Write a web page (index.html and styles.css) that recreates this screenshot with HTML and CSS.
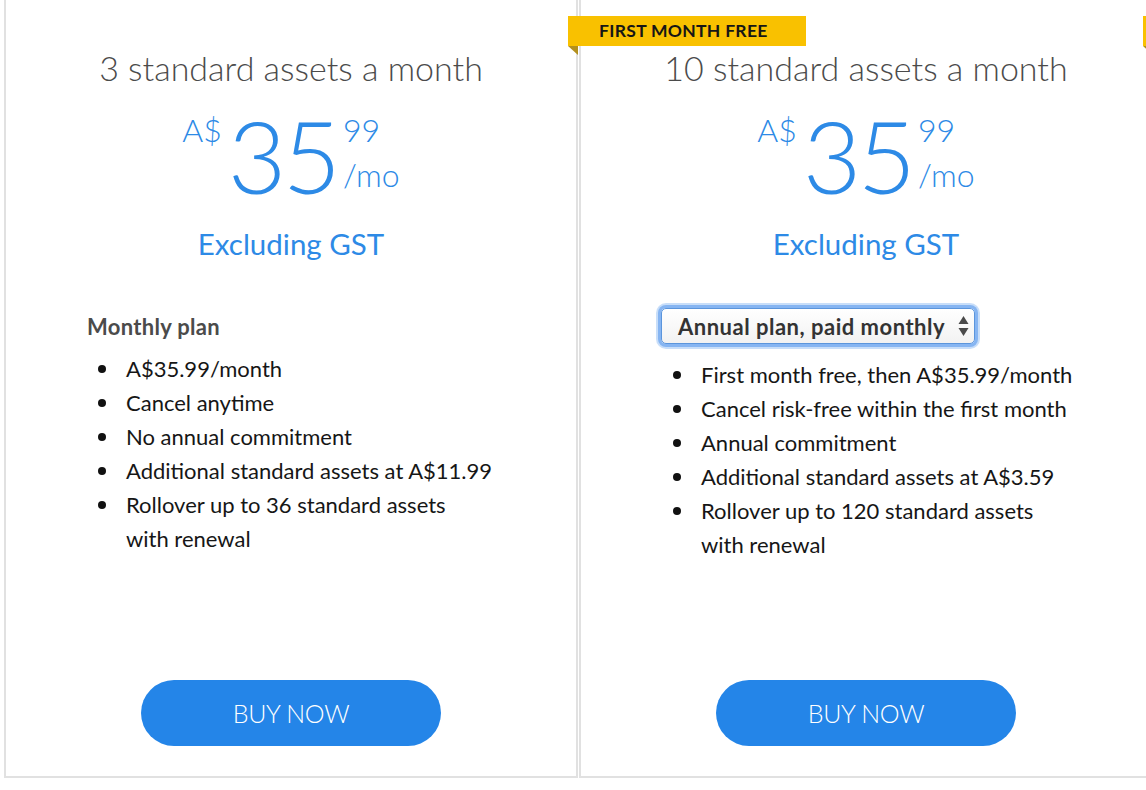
FILE: index.html
```html
<!DOCTYPE html>
<html lang="en">
<head>
<meta charset="utf-8">
<title>Plans</title>
<link rel="stylesheet" href="styles.css">
</head>
<body>
<div class="cards">
  <section class="card">
    <h2 class="title">3 standard assets a month</h2>
    <div class="price">
      <span class="cur">A$</span>
      <span class="big">35</span>
      <span class="side"><span class="cents">99</span><span class="per">/mo</span></span>
    </div>
    <div class="tax">Excluding GST</div>
    <div class="plan">
      <div class="plan-name">Monthly plan</div>
      <ul class="feats">
        <li>A$35.99/month</li>
        <li>Cancel anytime</li>
        <li>No annual commitment</li>
        <li>Additional standard assets at A$11.99</li>
        <li>Rollover up to 36 standard assets with&nbsp;renewal</li>
      </ul>
    </div>
    <div class="btn-row"><a class="buy" href="#">BUY NOW</a></div>
  </section>
  <section class="card">
    <div class="ribbon">FIRST MONTH FREE</div>
    <h2 class="title">10 standard assets a month</h2>
    <div class="price">
      <span class="cur">A$</span>
      <span class="big">35</span>
      <span class="side"><span class="cents">99</span><span class="per">/mo</span></span>
    </div>
    <div class="tax">Excluding GST</div>
    <div class="plan">
      <div class="select">
        <span class="sel-text">Annual plan, paid monthly</span>
        <svg class="sel-arrows" width="13" height="24" viewBox="0 0 13 24"><path d="M6.5 2 L11.5 10 L1.5 10 Z" fill="#4a4a4a"/><path d="M1.5 14 L11.5 14 L6.5 22 Z" fill="#4a4a4a"/></svg>
      </div>
      <ul class="feats">
        <li>First month free, then A$35.99/month</li>
        <li>Cancel risk-free within the first month</li>
        <li>Annual commitment</li>
        <li>Additional standard assets at A$3.59</li>
        <li>Rollover up to 120 standard assets with&nbsp;renewal</li>
      </ul>
    </div>
    <div class="btn-row"><a class="buy" href="#">BUY NOW</a></div>
  </section>
  <section class="card">
    <div class="ribbon" aria-hidden="true"></div>
  </section>
</div>
</body>
</html>
```
FILE: styles.css
```css
* { box-sizing: border-box; }
html, body { margin: 0; padding: 0; background: #fff; overflow: hidden; }
body { font-family: "Lato", "Open Sans", sans-serif; }
.cards {
  display: flex;
  gap: 1px;
  padding-left: 4px;
  width: 1800px;
}
.card {
  position: relative;
  flex: 0 0 574px;
  height: 778px;
  border: 2px solid #e1e1e1;
  border-top: none;
  display: flex;
  flex-direction: column;
  padding-top: 46px;
  padding-bottom: 30px;
}
.ribbon {
  position: absolute;
  top: 16px;
  left: -13px;
  width: 238px;
  height: 30px;
  background: #f9c100;
  color: #161616;
  font-weight: 700;
  font-size: 17.5px;
  letter-spacing: 0.3px;
  line-height: 30px;
  padding-left: 31px;
}
.ribbon::after {
  content: "";
  position: absolute;
  left: 0;
  top: 30px;
  border-top: 9px solid #b3901e;
  border-left: 10px solid transparent;
}
.title {
  margin: 0;
  text-align: center;
  font-weight: 300;
  font-size: 34px;
  line-height: 44px;
  color: #4b4b4b;
}
.price {
  display: flex;
  justify-content: center;
  align-items: flex-start;
  color: #2d8ae6;
  margin-top: 20px;
  height: 96px;
}
.cur {
  font-weight: 300;
  font-size: 32px;
  line-height: 34px;
  margin-top: 3px;
  margin-right: 6px;
}
.big {
  font-weight: 300;
  font-size: 101px;
  letter-spacing: -4px;
  line-height: 90px;
  margin-right: 6px;
}
.side { display: flex; flex-direction: column; }
.cents { font-weight: 300; font-size: 32px; line-height: 34px; margin-top: 3px; }
.per { font-weight: 300; font-size: 32px; line-height: 34px; margin-top: 11px; }
.tax {
  text-align: center;
  color: #2d8ae6;
  font-size: 29.5px;
  line-height: 40px;
  margin-top: 18px;
}
.plan {
  padding-left: 81px;
  margin-top: 48px;
}
.plan-name {
  font-weight: 700;
  font-size: 22px;
  letter-spacing: 0.3px;
  line-height: 30px;
  color: #4b4b4b;
}
.select {
  display: flex;
  align-items: center;
  justify-content: space-between;
  width: 314px;
  height: 36px;
  margin-left: -1px;
  margin-top: -4px;
  padding: 0 4px 0 16px;
  border: 1px solid #5b95dc;
  border-radius: 5px;
  background: linear-gradient(#ffffff, #f2f2f2);
  box-shadow: 0 0 0 3px #86b5f2, 0 0 0 5px rgba(134,181,242,0.45);
}
.sel-text {
  font-weight: 700;
  font-size: 22px;
  letter-spacing: 0.5px;
  color: #333;
}
.feats {
  list-style: none;
  margin: 10px 0 0;
  padding-left: 39px;
  width: 412px;
  font-size: 22px;
  line-height: 34px;
  color: #161616;
}
.feats li { position: relative; }
.feats li::before {
  content: "";
  position: absolute;
  left: -28px;
  top: 13px;
  width: 8px;
  height: 8px;
  border-radius: 50%;
  background: #111;
}
.select + .feats { margin-top: 14px; }
.btn-row {
  margin-top: auto;
  display: flex;
  justify-content: center;
}
.buy {
  display: flex;
  align-items: center;
  justify-content: center;
  width: 300px;
  height: 66px;
  border-radius: 33px;
  background: #2485e8;
  color: #fff;
  text-decoration: none;
  font-weight: 300;
  font-size: 25px;
  letter-spacing: -0.3px;
}
```
